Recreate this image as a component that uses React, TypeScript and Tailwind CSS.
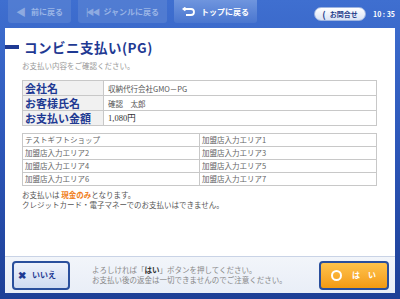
import { useState } from 'react';

const stores = [
  ['テストギフトショップ', '加盟店入力エリア1'],
  ['加盟店入力エリア2', '加盟店入力エリア3'],
  ['加盟店入力エリア4', '加盟店入力エリア5'],
  ['加盟店入力エリア6', '加盟店入力エリア7'],
];

const info = [
  ['会社名', '収納代行会社GMO－PG'],
  ['お客様氏名', '確認　太郎'],
  ['お支払い金額', '1,080円'],
];

function NavTab({ label, icon, active }: { label: string; icon: React.ReactNode; active?: boolean }) {
  return (
    <div
      className={
        'flex h-[23px] items-center gap-[5px] rounded-b-[3px] px-[8px] text-[8px] font-bold ' +
        (active
          ? 'bg-gradient-to-b from-[#6f95de] to-[#4a76cf] text-white'
          : 'bg-[#5d86d4]/60 text-[#9ab5e6]')
      }
    >
      {icon}
      <span>{label}</span>
    </div>
  );
}

export default function App() {
  const [answer, setAnswer] = useState<string | null>(null);

  return (
    <div
      className="flex h-[299px] w-[400px] flex-col overflow-hidden bg-gradient-to-b from-[#3f6fd0] via-[#2c56b8] to-[#1d3f96] text-[#555]"
      style={{ fontFamily: '"Noto Sans CJK JP", "Noto Sans", sans-serif' }}
    >
      {/* 上部ナビ */}
      <div className="flex h-[28px] shrink-0 items-start gap-[7px] pl-[8px] pr-[5px]">
        <NavTab
          label="前に戻る"
          icon={<span className="text-[10px] text-[#8eaae0]">◀</span>}
        />
        <NavTab
          label="ジャンルに戻る"
          icon={<span className="text-[8px] tracking-[-2px] text-[#8eaae0]">|◀◀</span>}
        />
        <NavTab
          active
          label="トップに戻る"
          icon={
            <svg width="14" height="10" viewBox="0 0 14 10" fill="none" stroke="white" strokeWidth="1.8">
              <path d="M2 2h7a3 3 0 0 1 0 6H4" />
              <path d="M3.5 0.5L1.5 2l2 1.5" />
            </svg>
          }
        />
        <div className="ml-auto mt-[7px] flex items-center gap-[7px]">
          <div className="flex h-[14px] w-[52px] items-center justify-center gap-[4px] rounded-full border border-[#9db4e0] bg-gradient-to-b from-white to-[#d9e3f5] text-[7px] font-bold text-[#1f3d8a]">
            <span className="text-[9px] leading-none">(</span>
            <span>お問合せ</span>
          </div>
          <span className="text-[7px] font-bold text-white">10 : 35</span>
        </div>
      </div>

      {/* 本体 */}
      <div className="mx-[5px] flex flex-1 flex-col bg-white">
        <div className="flex-1 pl-[17px] pr-[17px]">
          <div className="mt-[11px] flex items-center">
            <div className="-ml-[17px] mr-[5px] h-[4px] w-[14px] bg-[#1f3a93]" />
            <h1 className="text-[13.5px] font-bold leading-[16px] tracking-[0.5px] text-[#1f3a93]">コンビニ支払い(PG)</h1>
          </div>
          <p className="mt-[6px] text-[7.5px] leading-[10px] text-[#999]">お支払い内容をご確認ください。</p>

          <table className="mt-[9px] w-[355px] border-collapse">
            <tbody>
              {info.map(([k, v]) => (
                <tr key={k} className="h-[15px]">
                  <td className="w-[81px] overflow-hidden border border-[#c8c8c8] bg-[#f1f1f1] px-[2px] py-0 text-[11px] font-bold leading-[13px] text-[#1f3a93]">
                    {k}
                  </td>
                  <td
                    className="border border-[#c8c8c8] px-[4px] py-0 text-[7.5px] leading-[13px] text-[#555]"
                    style={k === 'お支払い金額' ? { fontFamily: '"Liberation Serif", serif', fontSize: '8.5px', color: '#333' } : undefined}
                  >
                    {v}
                  </td>
                </tr>
              ))}
            </tbody>
          </table>

          <table className="mt-[7px] w-[355px] table-fixed border-collapse">
            <tbody>
              {stores.map(([a, b]) => (
                <tr key={a} className="h-[13px]">
                  <td className="border border-[#c8c8c8] px-[2px] py-0 text-[7.5px] leading-[12px] text-[#666]">{a}</td>
                  <td className="border border-[#c8c8c8] px-[2px] py-0 text-[7.5px] leading-[12px] text-[#666]">{b}</td>
                </tr>
              ))}
            </tbody>
          </table>

          <div className="mt-[4px] text-[7.5px] leading-[10px] text-[#555]">
            <p>
              お支払いは <span className="font-bold text-[#f07d1a]">現金のみ</span>となります。
            </p>
            <p>クレジットカード・電子マネーでのお支払いはできません。</p>
          </div>
        </div>

        {/* 下部ボタン */}
        <div className="flex h-[37px] shrink-0 items-center border-t border-[#c9d3e6] bg-gradient-to-b from-[#f2f5fa] to-[#e9eef7] pl-[7px] pr-[6px]">
          <button
            onClick={() => setAnswer('no')}
            className="flex h-[29px] w-[58px] items-center gap-[6px] rounded-[4px] border-2 border-[#2a4f9c] bg-gradient-to-b from-[#eef2fb] to-[#cfdbf1] pl-[4px] text-[8px] font-bold text-[#1f3a93]"
          >
            <span className="text-[10px] leading-none">✖</span>
            <span>いいえ</span>
          </button>
          <div className="ml-[22px] flex-1 text-[7.5px] leading-[10px] text-[#888]">
            <p>
              よろしければ「<span className="font-bold text-[#333]">はい</span>」ボタンを押してください。
            </p>
            <p>お支払い後の返金は一切できませんのでご注意ください。</p>
          </div>
          <button
            onClick={() => setAnswer('yes')}
            className={
              'flex h-[29px] w-[70px] items-center gap-[10px] rounded-[4px] border-2 border-[#2a4f9c] bg-gradient-to-b from-[#ffc34a] to-[#f39a0e] pl-[10px] text-[8px] font-bold text-white ' +
              (answer === 'yes' ? 'opacity-90' : '')
            }
          >
            <span className="inline-block h-[11px] w-[11px] rounded-full border-2 border-white" />
            <span>は　い</span>
          </button>
        </div>
      </div>
      <div className="h-[6px] shrink-0" />
    </div>
  );
}
